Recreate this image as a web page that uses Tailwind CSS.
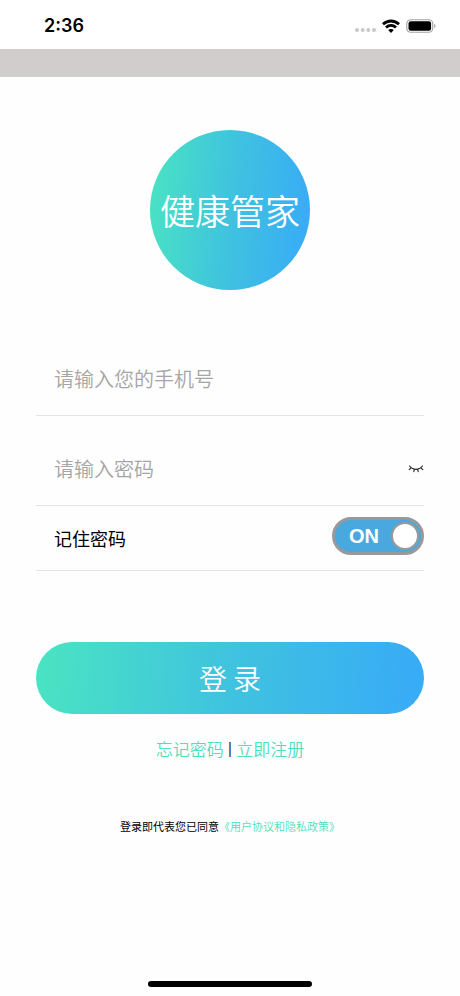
<!DOCTYPE html>
<html lang="zh-CN">
<head>
<meta charset="utf-8">
<meta name="viewport" content="width=device-width, initial-scale=1">
<title>健康管家</title>
<script src="https://cdn.jsdelivr.net/npm/@tailwindcss/browser@4"></script>
</head>
<body class="flex min-h-screen flex-col bg-[#fefefe] font-['Noto_Sans_CJK_SC',sans-serif] font-[350] text-black">
  <header>
    <div class="flex h-[49px] items-center justify-between bg-white pt-[2px] pr-6 pl-11">
      <time class="font-['Inter',sans-serif] text-lg font-semibold">2:36</time>
      <div class="flex items-center gap-[6px]">
        <svg class="mt-[9px] h-1 w-[21px]" viewBox="0 0 21 4" fill="#c8c8c8" aria-hidden="true"><circle cx="2" cy="2" r="2"/><circle cx="7.7" cy="2" r="2"/><circle cx="13.3" cy="2" r="2"/><circle cx="19" cy="2" r="2"/></svg>
        <svg class="h-[14px] w-[18px]" viewBox="0 0 18 14" fill="none" stroke="#000" stroke-width="2.8" aria-hidden="true"><path d="M1 5.2C5.6.9 12.4.9 17 5.2"/><path d="M4 8.5c2.9-2.7 7.1-2.7 10 0"/><path d="M9 14l-2.8-3c1.6-1.4 4-1.4 5.6 0z" fill="#000" stroke="none"/></svg>
        <svg class="h-[14px] w-[30px]" viewBox="0 0 30 14" aria-hidden="true"><rect x=".75" y=".75" width="26" height="12.5" rx="4" fill="#fff" stroke="#a5a5a5" stroke-width="1.2"/><rect x="2.5" y="2.2" width="22.6" height="9.6" rx="2.3"/><path d="M28.3 4.7c1.6.9 1.6 3.7 0 4.6z" fill="#999"/></svg>
      </div>
    </div>
    <div class="h-7 bg-[#d1cdcc]"></div>
  </header>
  <main class="flex flex-col items-center px-9 pt-[53px]">
    <h1 class="flex size-40 items-center justify-center rounded-full bg-linear-[95deg,#4ae4c2,#3fc3df_50%,#38aaf8] text-[35px] font-[350] whitespace-nowrap text-white">健康管家</h1>
    <form class="mt-9 w-full">
      <div class="flex h-[90px] items-center border-b border-[#e4e4e4] pt-4">
        <input type="tel" aria-label="手机号" placeholder="请输入您的手机号" class="h-10 w-full px-[18px] text-xl outline-none placeholder:text-[#a5a5a5]">
      </div>
      <div class="flex h-[90px] items-center border-b border-[#e4e4e4] pt-4">
        <input type="password" aria-label="密码" placeholder="请输入密码" class="h-10 min-w-0 flex-1 px-[18px] text-xl outline-none placeholder:text-[#a5a5a5]">
        <button type="button" aria-label="显示密码">
          <svg class="h-2 w-4" viewBox="0 0 16 8" fill="none" stroke="#333" stroke-width="1.2" stroke-linecap="round" aria-hidden="true"><path d="M1.500 1c3.600 4.600 9.400 4.600 13 0M3.200 2.800L1.200 4.600M6.300 4.300l-.5 2.400M9.700 4.300l.5 2.400M12.800 2.800L14.800 4.600"/></svg>
        </button>
      </div>
      <label class="flex h-[65px] items-center justify-between border-b border-[#e4e4e4] pb-1 pl-[18px] text-lg">
        <span class="pt-1 font-normal">记住密码</span>
        <input type="checkbox" checked class="peer sr-only">
        <span class="flex h-[38px] w-[92px] flex-row-reverse items-center justify-between rounded-full border-3 border-[#999] bg-[#bbb] px-[2px] font-['Liberation_Sans',sans-serif] text-xl font-bold text-white peer-checked:flex-row peer-checked:bg-[#49a9de] peer-checked:pl-[14px]" aria-hidden="true">ON<span class="size-7 rounded-full border-2 border-[#999] bg-white"></span></span>
      </label>
      <button type="submit" class="mt-[71px] h-[72px] w-full rounded-full bg-linear-[95deg,#4ae4c2,#3fc3df_50%,#38aaf8] text-[28px] text-white">登 录</button>
    </form>
    <nav class="mt-[22px] flex items-center gap-1 text-[17px]">
      <a href="#" class="text-[#4edfbd]">忘记密码</a><span class="font-['Liberation_Sans',sans-serif] text-[#444]">|</span><a href="#" class="text-[#4edfbd]">立即注册</a>
    </nav>
    <p class="mt-14 text-[11px] font-normal">登录即代表您已同意<a href="#" class="font-[350] text-[#4edfbd]">《用户协议和隐私政策》</a></p>
  </main>
  <div class="mx-auto mt-auto mb-[9px] h-[6px] w-[164px] rounded-full bg-black"></div>
</body>
</html>
